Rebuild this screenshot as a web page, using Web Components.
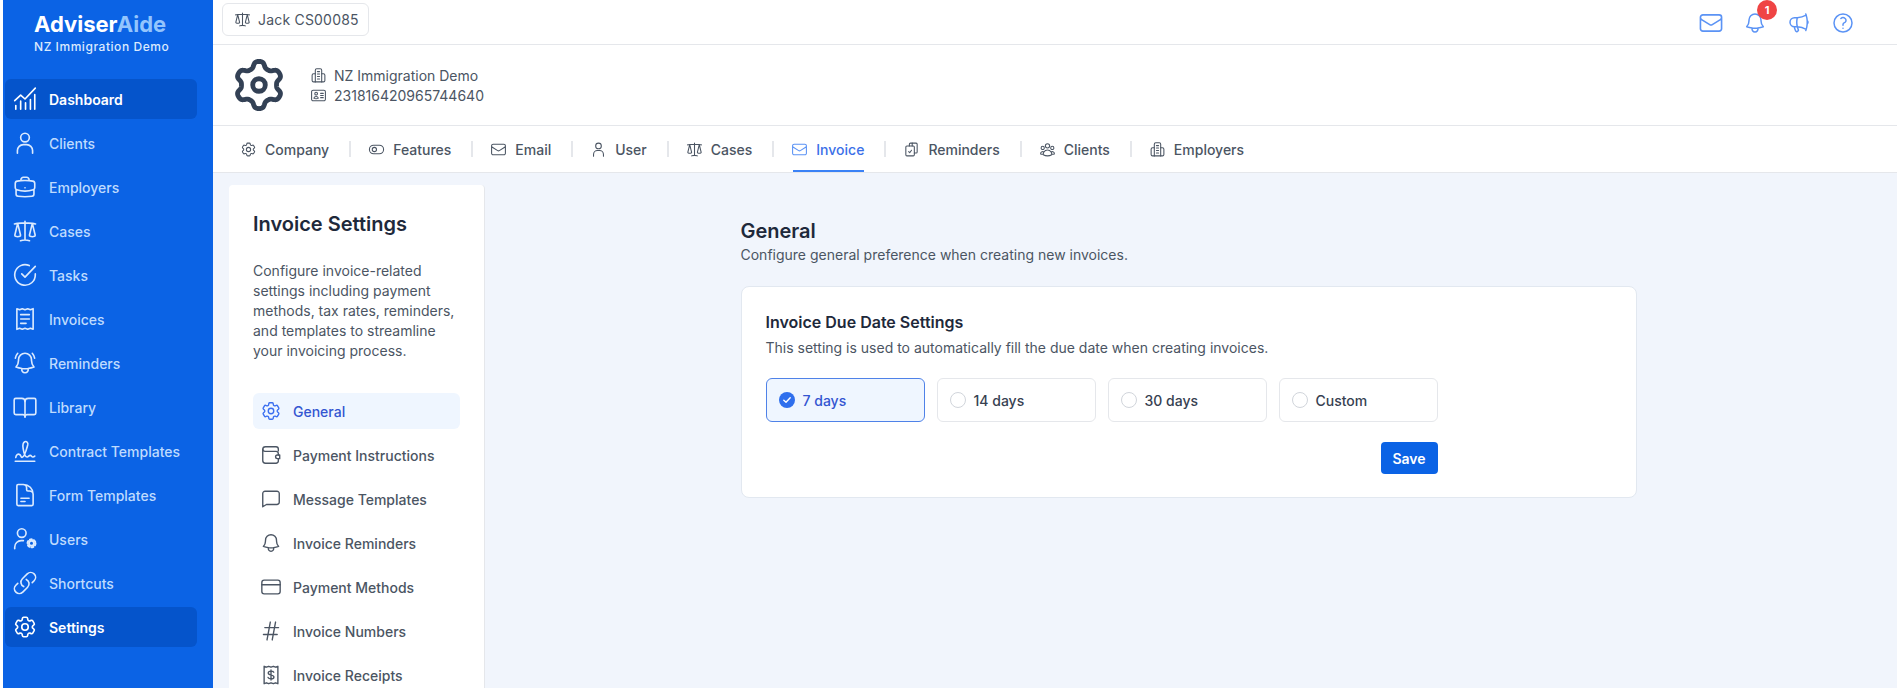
<!DOCTYPE html>
<html lang="en">
<head>
<meta charset="utf-8">
<title>Invoice Settings</title>
<style>
  html, body { margin: 0; height: 688px; overflow: hidden; background: #fff; }
  body { font-family: Inter, "Noto Sans", sans-serif; font-size: 14px; color: #4b5563; }
</style>
</head>
<body>

<app-shell>
  <side-bar slot="side">
    <nav-item icon="dashboard" active>Dashboard</nav-item>
    <nav-item icon="user">Clients</nav-item>
    <nav-item icon="briefcase">Employers</nav-item>
    <nav-item icon="scale">Cases</nav-item>
    <nav-item icon="task">Tasks</nav-item>
    <nav-item icon="receipt">Invoices</nav-item>
    <nav-item icon="bellalert">Reminders</nav-item>
    <nav-item icon="book">Library</nav-item>
    <nav-item icon="signature">Contract Templates</nav-item>
    <nav-item icon="doc">Form Templates</nav-item>
    <nav-item icon="usercog">Users</nav-item>
    <nav-item icon="link">Shortcuts</nav-item>
    <nav-item icon="cog" active>Settings</nav-item>
  </side-bar>

  <top-bar></top-bar>
  <company-header></company-header>

  <tab-bar>
    <tab-item icon="cog">Company</tab-item><tab-sep></tab-sep>
    <tab-item icon="toggle">Features</tab-item><tab-sep></tab-sep>
    <tab-item icon="mail">Email</tab-item><tab-sep></tab-sep>
    <tab-item icon="user">User</tab-item><tab-sep></tab-sep>
    <tab-item icon="scale">Cases</tab-item><tab-sep></tab-sep>
    <tab-item icon="mail" active>Invoice</tab-item><tab-sep></tab-sep>
    <tab-item icon="copycheck">Reminders</tab-item><tab-sep></tab-sep>
    <tab-item icon="group">Clients</tab-item><tab-sep></tab-sep>
    <tab-item icon="building">Employers</tab-item>
  </tab-bar>

  <settings-page>
    <settings-panel slot="panel">
      <panel-item icon="cog" active>General</panel-item>
      <panel-item icon="wallet">Payment Instructions</panel-item>
      <panel-item icon="chat">Message Templates</panel-item>
      <panel-item icon="bell">Invoice Reminders</panel-item>
      <panel-item icon="card">Payment Methods</panel-item>
      <panel-item icon="hash">Invoice Numbers</panel-item>
      <panel-item icon="dollar">Invoice Receipts</panel-item>
    </settings-panel>
    <general-settings>
      <due-option checked>7 days</due-option>
      <due-option>14 days</due-option>
      <due-option>30 days</due-option>
      <due-option>Custom</due-option>
    </general-settings>
  </settings-page>
</app-shell>

<script>
// the big round-lobed gear in the company header, sampled around the centre
function lobedGear() {
  const pts = [];
  for (let i = 0; i < 240; i++) {
    const a = (i / 240) * Math.PI * 2;
    const s = Math.tanh(1.6 * Math.cos(6 * a)) / Math.tanh(1.6);
    const r = 8.5 + 1.25 * s;
    pts.push((12 + r * Math.sin(a)).toFixed(2) + ' ' + (12 - r * Math.cos(a)).toFixed(2));
  }
  return '<path d="M' + pts.join('L') + 'Z"/><circle cx="12" cy="12" r="2.600"/>';
}

// icon paths, all on a 24 box
const ICONS = {
  gear: lobedGear(),
  dashboard: '<path d="M2.500 13.500 8 8.500l4 3.500 9.500-10"/><path d="M3.500 21.500v-3.500M8 21.500v-7.500M12.500 21.500v-6M17 21.500v-9M21 21.500V8"/>',
  user: '<circle cx="12" cy="7" r="4"/><path d="M5 21.500V19a5.500 5.500 0 0 1 5.500-5.500h3A5.500 5.500 0 0 1 19 19v2.500"/>',
  briefcase: '<path d="M20.250 14.150v4.250c0 1.094-.787 2.036-1.872 2.180-2.087.277-4.216.420-6.378.420s-4.291-.143-6.378-.420c-1.085-.144-1.872-1.086-1.872-2.180v-4.250m16.500 0a2.180 2.180 0 0 0 .750-1.661V8.706c0-1.081-.768-2.015-1.837-2.175a48.114 48.114 0 0 0-3.413-.387m4.500 8.006c-.194.165-.420.295-.673.380A23.978 23.978 0 0 1 12 15.750c-2.648 0-5.195-.429-7.577-1.220a2.016 2.016 0 0 1-.673-.380m0 0A2.180 2.180 0 0 1 3 12.489V8.706c0-1.081.768-2.015 1.837-2.175a48.111 48.111 0 0 1 3.413-.387m7.500 0V5.250A2.250 2.250 0 0 0 13.500 3h-3a2.250 2.250 0 0 0-2.250 2.250v.894m7.500 0a48.667 48.667 0 0 0-7.500 0M12 12.750h.008v.008H12v-.008Z"/>',
  scale: '<path d="M12 3v17.250m0 0c-1.472 0-2.882.265-4.185.750M12 20.250c1.472 0 2.882.265 4.185.750M18.750 4.970A48.416 48.416 0 0 0 12 4.500c-2.291 0-4.545.160-6.750.470m13.500 0c1.010.143 2.010.317 3 .520m-3-.520 2.620 10.726c.122.499-.106 1.028-.589 1.202a5.988 5.988 0 0 1-2.031.352 5.988 5.988 0 0 1-2.031-.352c-.483-.174-.711-.703-.590-1.202L18.750 4.971Zm-16.500.520c.990-.203 1.990-.377 3-.520m0 0 2.620 10.726c.122.499-.106 1.028-.589 1.202a5.989 5.989 0 0 1-2.031.352 5.989 5.989 0 0 1-2.031-.352c-.483-.174-.711-.703-.590-1.202L5.250 4.971Z"/>',
  task: '<path d="M21.500 11v1a9.500 9.500 0 1 1-5.600-8.700"/><path d="M21.500 4 12 14l-3-3"/>',
  receipt: '<path d="M4.500 2.500 7 3.500l2.500-1 2.500 1 2.500-1 2.500 1 2.500-1v19l-2.500-1-2.500 1-2.500-1-2.500 1-2.500-1-2.500 1Z"/><path d="M8 8h8M8 12h8M8 16h5"/>',
  bellalert: '<path d="M14.857 17.082a23.848 23.848 0 0 0 5.454-1.310A8.967 8.967 0 0 1 18 9.750V9A6 6 0 0 0 6 9v.750a8.967 8.967 0 0 1-2.312 6.022c1.733.640 3.560 1.085 5.455 1.310m5.714 0a24.255 24.255 0 0 1-5.714 0m5.714 0a3 3 0 1 1-5.714 0M3.124 7.500A8.969 8.969 0 0 1 5.292 3m13.416 0a8.969 8.969 0 0 1 2.168 4.500"/>',
  bell: '<path d="M14.857 17.082a23.848 23.848 0 0 0 5.454-1.310A8.967 8.967 0 0 1 18 9.750V9A6 6 0 0 0 6 9v.750a8.967 8.967 0 0 1-2.312 6.022c1.733.640 3.560 1.085 5.455 1.310m5.714 0a24.255 24.255 0 0 1-5.714 0m5.714 0a3 3 0 1 1-5.714 0"/>',
  book: '<path d="M12 7v14.500"/><path d="M12 7a3 3 0 0 0-3-3H3.500A1.500 1.500 0 0 0 2 5.500v12A1.500 1.500 0 0 0 3.500 19H10a2 2 0 0 1 2 2 2 2 0 0 1 2-2h6.500a1.500 1.500 0 0 0 1.500-1.500v-12A1.500 1.500 0 0 0 20.500 4H15a3 3 0 0 0-3 3Z"/>',
  signature: '<path d="M3 21.500h18"/><path d="M3.500 18c.2-2.300 2-3.600 3.500-2.800 1.600.9 1 3 2.500 2.600 2.300-.6 4.300-9 5-11.300.6-2.200-1-3.800-2.700-3-1.600.8-2 3.500-1.500 6.300.5 3.200 1.700 7.700 3.700 7.700 1.300 0 1.500-1.500 2.800-1.500s1.200 1.500 2.500 1.500c.7 0 1.200-.3 1.700-.8"/>',
  doc: '<path d="M19.500 14.250v-2.625a3.375 3.375 0 0 0-3.375-3.375h-1.500A1.125 1.125 0 0 1 13.500 7.125v-1.500a3.375 3.375 0 0 0-3.375-3.375H8.250m0 12.750h7.500m-7.500 3H12M10.500 2.250H5.625c-.621 0-1.125.504-1.125 1.125v17.250c0 .621.504 1.125 1.125 1.125h12.750c.621 0 1.125-.504 1.125-1.125V11.250a9 9 0 0 0-9-9Z"/>',
  usercog: '<circle cx="9" cy="6.500" r="4"/><path d="M2.500 21v-1.500a6 6 0 0 1 6-6h2"/><circle cx="18" cy="16" r="2.300" stroke-width="1.800"/><circle cx="18" cy="16" r="3.700" stroke-width="1.800" stroke-dasharray="1.900 1.975"/>',
  link: '<path d="M13.190 8.688a4.500 4.500 0 0 1 1.242 7.244l-4.500 4.500a4.500 4.500 0 0 1-6.364-6.364l1.757-1.757m13.350-.622 1.757-1.757a4.500 4.500 0 0 0-6.364-6.364l-4.500 4.500a4.500 4.500 0 0 0 1.242 7.244"/>',
  cog: '<path d="M9.594 3.940c.090-.542.560-.940 1.110-.940h2.593c.550 0 1.020.398 1.110.940l.213 1.281c.063.374.313.686.645.870.074.040.147.083.220.127.325.196.720.257 1.075.124l1.217-.456a1.125 1.125 0 0 1 1.370.490l1.296 2.247a1.125 1.125 0 0 1-.260 1.431l-1.003.827c-.293.241-.438.613-.430.992a7.723 7.723 0 0 1 0 .255c-.008.378.137.750.430.991l1.004.827c.424.350.534.955.260 1.430l-1.298 2.247a1.125 1.125 0 0 1-1.369.491l-1.217-.456c-.355-.133-.750-.072-1.076.124a6.470 6.470 0 0 1-.220.128c-.331.183-.581.495-.644.869l-.213 1.281c-.090.543-.560.940-1.110.940h-2.594c-.550 0-1.019-.398-1.110-.940l-.213-1.281c-.062-.374-.312-.686-.644-.870a6.520 6.520 0 0 1-.220-.127c-.325-.196-.720-.257-1.076-.124l-1.217.456a1.125 1.125 0 0 1-1.369-.490l-1.297-2.247a1.125 1.125 0 0 1 .260-1.431l1.004-.827c.292-.240.437-.613.430-.991a6.932 6.932 0 0 1 0-.255c.007-.380-.138-.751-.430-.992l-1.004-.827a1.125 1.125 0 0 1-.260-1.430l1.297-2.247a1.125 1.125 0 0 1 1.370-.491l1.216.456c.356.133.751.072 1.076-.124.072-.044.146-.086.220-.128.332-.183.582-.495.644-.869l.214-1.280Z"/><path d="M15 12a3 3 0 1 1-6 0 3 3 0 0 1 6 0Z"/>',
  mail: '<path d="M21.750 6.750v10.500a2.250 2.250 0 0 1-2.250 2.250h-15a2.250 2.250 0 0 1-2.250-2.250V6.750m19.500 0A2.250 2.250 0 0 0 19.500 4.500h-15a2.250 2.250 0 0 0-2.250 2.250m19.500 0v.243a2.250 2.250 0 0 1-1.070 1.916l-7.500 4.615a2.250 2.250 0 0 1-2.360 0L3.320 8.910a2.250 2.250 0 0 1-1.070-1.916V6.750"/>',
  megaphone: '<path d="M10.340 15.840c-.688-.060-1.386-.090-2.090-.090H7.500a4.500 4.500 0 1 1 0-9h.750c.704 0 1.402-.030 2.090-.090m0 9.180c.253.962.584 1.892.985 2.783.247.550.060 1.210-.463 1.511l-.657.380c-.551.318-1.260.117-1.527-.461a20.845 20.845 0 0 1-1.440-4.282m3.102.069a18.030 18.030 0 0 1-.590-4.590c0-1.586.205-3.124.590-4.590m0 9.180a23.848 23.848 0 0 1 8.835 2.535M10.340 6.660a23.847 23.847 0 0 0 8.835-2.535m0 0A23.740 23.740 0 0 0 18.795 3m.380 1.125a23.910 23.910 0 0 1 1.014 5.395m-1.014 8.855c-.118.380-.245.754-.380 1.125m.380-1.125a23.910 23.910 0 0 0 1.014-5.395m0-3.460c.495.413.811 1.035.811 1.730 0 .695-.316 1.317-.811 1.730m0-3.460a24.347 24.347 0 0 1 0 3.460"/>',
  help: '<path d="M9.879 7.519c1.171-1.025 3.071-1.025 4.242 0 1.172 1.025 1.172 2.687 0 3.712-.203.179-.430.326-.670.442-.745.361-1.450.999-1.450 1.827v.750M21 12a9 9 0 1 1-18 0 9 9 0 0 1 18 0Zm-9 5.250h.008v.008H12v-.008Z"/>',
  toggle: '<rect x="2" y="6" width="20" height="12" rx="6"/><circle cx="9" cy="12" r="3"/>',
  copycheck: '<path d="M9 7V4.500A1.500 1.500 0 0 1 10.500 3h8A1.500 1.500 0 0 1 20 4.500v11a1.500 1.500 0 0 1-1.500 1.500H16"/><rect x="4" y="7" width="12" height="14" rx="1.500"/><path d="m8 15 1.500 1.500L12 13"/><path d="M13 3v4"/>',
  group: '<path d="M18 18.720a9.094 9.094 0 0 0 3.741-.479 3 3 0 0 0-4.682-2.720m.940 3.198.001.031c0 .225-.012.447-.037.666A11.944 11.944 0 0 1 12 21c-2.170 0-4.207-.576-5.963-1.584A6.062 6.062 0 0 1 6 18.719m12 0a5.971 5.971 0 0 0-.941-3.197m0 0A5.995 5.995 0 0 0 12 12.750a5.995 5.995 0 0 0-5.058 2.772m0 0a3 3 0 0 0-4.681 2.720 8.986 8.986 0 0 0 3.740.477m.940-3.197a5.971 5.971 0 0 0-.940 3.197M15 6.750a3 3 0 1 1-6 0 3 3 0 0 1 6 0Zm6 3a2.250 2.250 0 1 1-4.500 0 2.250 2.250 0 0 1 4.500 0Zm-13.500 0a2.250 2.250 0 1 1-4.500 0 2.250 2.250 0 0 1 4.500 0Z"/>',
  building: '<path d="M7.500 21V4.500A2 2 0 0 1 9.500 2.500h5a2 2 0 0 1 2 2V21"/><path d="M7.500 9.500H5a2 2 0 0 0-2 2V19a2 2 0 0 0 2 2h14a2 2 0 0 0 2-2v-7.500a2 2 0 0 0-2-2h-2.500"/><path d="M10.500 6.500h3M10.500 10h3M10.500 13.500h3M10.500 17h3"/>',
  idcard: '<path d="M15 9h3.750M15 12h3.750M15 15h3.750M4.500 19.500h15a2.250 2.250 0 0 0 2.250-2.250V6.750A2.250 2.250 0 0 0 19.500 4.500h-15a2.250 2.250 0 0 0-2.250 2.250v10.500A2.250 2.250 0 0 0 4.500 19.500Zm6-10.125a1.875 1.875 0 1 1-3.750 0 1.875 1.875 0 0 1 3.750 0Zm1.294 6.336a6.721 6.721 0 0 1-3.170.789 6.721 6.721 0 0 1-3.168-.789 3.376 3.376 0 0 1 6.338 0Z"/>',
  wallet: '<path d="M20 7.500V5.500A2.500 2.500 0 0 0 17.500 3H6a3 3 0 0 0-3 3v12a3 3 0 0 0 3 3h11.500a2.500 2.500 0 0 0 2.500-2.500v-2"/><path d="M3 6a2.500 2.500 0 0 0 2.500 2h12A2.500 2.500 0 0 1 20 10.500V12"/><path d="M21.500 12H19a2 2 0 0 0 0 4h2.500Z"/>',
  chat: '<path d="M3 20.500V6a2.500 2.500 0 0 1 2.500-2.500h13A2.500 2.500 0 0 1 21 6v9.500a2.500 2.500 0 0 1-2.500 2.500H7Z"/>',
  card: '<rect x="2" y="4.500" width="20" height="15" rx="2.500"/><path d="M2 9.500h20"/>',
  hash: '<path d="M5.250 8.250h15m-16.500 7.500h15m-1.800-13.500-3.600 19.500m-2.100-19.500-3.600 19.500"/>',
  dollar: '<path d="M4.500 2.500 7 3.500l2.500-1 2.500 1 2.500-1 2.500 1 2.500-1v19l-2.500-1-2.500 1-2.500-1-2.500 1-2.500-1-2.500 1Z"/><path d="M12 6.500v11M15 9c-.5-1-1.500-1.200-3-1.200-1.700 0-3 .7-3 2.100 0 3.100 6.200 1.300 6.200 4.200 0 1.400-1.400 2.100-3.200 2.100-1.500 0-2.700-.4-3.200-1.500"/>'
};

class AppIcon extends HTMLElement {
  connectedCallback() {
    const size = this.getAttribute('size') || 24;
    const sw = this.getAttribute('stroke') || 1.5;
    const root = this.attachShadow({ mode: 'open' });
    root.innerHTML = `
      <style>
        :host { display: block; flex: none; width: ${size}px; height: ${size}px; }
        svg { display: block; width: 100%; height: 100%; fill: none; stroke: currentColor; stroke-width: ${sw}; stroke-linecap: round; stroke-linejoin: round; }
      </style>
      <svg viewBox="0 0 24 24" aria-hidden="true">${ICONS[this.getAttribute('name')] || ''}</svg>`;
  }
}
customElements.define('app-icon', AppIcon);

const shellTemplate = document.createElement('template');
shellTemplate.innerHTML = `
  <style>
    :host { display: flex; height: 688px; padding-left: 3px; box-sizing: border-box; background: #fff; }
    .main { flex: 1; min-width: 0; display: flex; flex-direction: column; }
  </style>
  <slot name="side"></slot>
  <div class="main"><slot></slot></div>`;

class AppShell extends HTMLElement {
  connectedCallback() {
    this.attachShadow({ mode: 'open' }).appendChild(shellTemplate.content.cloneNode(true));
  }
}
customElements.define('app-shell', AppShell);

class SideBar extends HTMLElement {
  connectedCallback() {
    this.attachShadow({ mode: 'open' }).innerHTML = `
      <style>
        :host { display: flex; flex-direction: column; flex: none; width: 210px; height: 688px; background: #0b63e5; }
        .logo { height: 79px; box-sizing: border-box; padding: 10px 0 0 31px; }
        .name { font-size: 22px; line-height: 28px; font-weight: 700; color: #fff; }
        .name span { color: #93c5fd; }
        .org { font-size: 12px; line-height: 16px; font-weight: 500; color: #dbeafe; letter-spacing: 0.55px; margin-top: 1px; }
        nav { display: flex; flex-direction: column; gap: 4px; }
      </style>
      <div class="logo">
        <div class="name">Adviser<span>Aide</span></div>
        <div class="org">NZ Immigration Demo</div>
      </div>
      <nav><slot></slot></nav>`;
  }
}
customElements.define('side-bar', SideBar);

class NavItem extends HTMLElement {
  connectedCallback() {
    this.attachShadow({ mode: 'open' }).innerHTML = `
      <style>
        :host { display: flex; align-items: center; gap: 11px; width: 192px; height: 40px; box-sizing: border-box; margin-left: 2px; padding-left: 7px; border-radius: 6px; font-size: 14px; font-weight: 500; color: #bfdbfe; }
        :host([active]) { background: #0554cb; color: #fff; font-weight: 600; }
        app-icon { color: #dbeafe; }
        :host([active]) app-icon { color: #fff; }
      </style>
      <app-icon name="${this.getAttribute('icon')}" size="26"></app-icon>
      <span><slot></slot></span>`;
  }
}
customElements.define('nav-item', NavItem);

class TopBar extends HTMLElement {
  connectedCallback() {
    this.attachShadow({ mode: 'open' }).innerHTML = `
      <style>
        :host { display: flex; justify-content: space-between; height: 45px; box-sizing: border-box; border-bottom: 1px solid #e5e7eb; padding: 3px 32px 0 9px; background: #fff; }
        .chip { display: flex; align-items: center; gap: 7px; height: 33px; box-sizing: border-box; padding: 0 9px 0 11px; border: 1px solid #e5e7eb; border-radius: 6px; font-size: 14px; color: #4b5563; letter-spacing: 0.2px; }
        .actions { display: flex; align-items: center; height: 40px; color: #5b93f5; }
        .btn { position: relative; display: flex; align-items: center; justify-content: center; width: 44px; height: 40px; }
        .badge { position: absolute; left: 24px; top: -3px; width: 20px; height: 20px; border-radius: 50%; background: #ef4444; color: #fff; font-size: 11px; font-weight: 700; line-height: 20px; text-align: center; }
      </style>
      <div class="chip"><app-icon name="scale" size="17"></app-icon><span>Jack CS00085</span></div>
      <div class="actions">
        <div class="btn"><app-icon name="mail" size="26"></app-icon></div>
        <div class="btn"><app-icon name="bell" size="24"></app-icon><span class="badge">1</span></div>
        <div class="btn"><app-icon name="megaphone" size="24"></app-icon></div>
        <div class="btn"><app-icon name="help" size="24"></app-icon></div>
      </div>`;
  }
}
customElements.define('top-bar', TopBar);

class CompanyHeader extends HTMLElement {
  connectedCallback() {
    this.attachShadow({ mode: 'open' }).innerHTML = `
      <style>
        :host { display: flex; align-items: center; gap: 22px; height: 81px; box-sizing: border-box; padding: 0 0 0 17px; background: #fff; border-bottom: 1px solid #e5e7eb; }
        .big { color: #334155; }
        .rows { display: flex; flex-direction: column; }
        .row { display: flex; align-items: center; gap: 7px; height: 20px; font-size: 14px; color: #4b5563; }
      </style>
      <app-icon class="big" name="gear" size="58" stroke="2"></app-icon>
      <div class="rows">
        <div class="row"><app-icon name="building" size="17"></app-icon><span>NZ Immigration Demo</span></div>
        <div class="row"><app-icon name="idcard" size="17"></app-icon><span>231816420965744640</span></div>
      </div>`;
  }
}
customElements.define('company-header', CompanyHeader);

class TabBar extends HTMLElement {
  connectedCallback() {
    this.attachShadow({ mode: 'open' }).innerHTML = `
      <style>
        :host { display: flex; align-items: center; height: 47px; box-sizing: border-box; padding-left: 27px; background: #fff; border-bottom: 1px solid #e5e7eb; }
      </style>
      <slot></slot>`;
  }
}
customElements.define('tab-bar', TabBar);

class TabItem extends HTMLElement {
  connectedCallback() {
    this.attachShadow({ mode: 'open' }).innerHTML = `
      <style>
        :host { position: relative; display: flex; align-items: center; gap: 8px; height: 46px; font-size: 14px; font-weight: 500; color: #4b5563; }
        :host([active]) { color: #3b6fe8; }
        :host([active]) app-icon { color: #5b93f5; }
        :host([active])::after { content: ""; position: absolute; left: 2px; right: 0; bottom: 0; height: 2px; background: #3b82f6; }
      </style>
      <app-icon name="${this.getAttribute('icon')}" size="17"></app-icon>
      <span><slot></slot></span>`;
  }
}
customElements.define('tab-item', TabItem);

class TabSep extends HTMLElement {
  connectedCallback() {
    this.attachShadow({ mode: 'open' }).innerHTML = `
      <style>:host { display: block; flex: none; width: 2px; height: 16px; margin: 0 17px 0 20px; background: #e5e7eb; }</style>`;
  }
}
customElements.define('tab-sep', TabSep);

class SettingsPage extends HTMLElement {
  connectedCallback() {
    this.attachShadow({ mode: 'open' }).innerHTML = `
      <style>
        :host { display: flex; flex: 1; min-height: 0; overflow: hidden; box-sizing: border-box; background: #f1f5fc; padding: 12px 0 0 16px; }
        .content { flex: 1; min-width: 0; display: flex; justify-content: center; padding-right: 5px; }
      </style>
      <slot name="panel"></slot>
      <div class="content"><slot></slot></div>`;
  }
}
customElements.define('settings-page', SettingsPage);

class SettingsPanel extends HTMLElement {
  connectedCallback() {
    this.attachShadow({ mode: 'open' }).innerHTML = `
      <style>
        :host { display: block; flex: none; width: 256px; box-sizing: border-box; padding: 25px 24px 24px; background: #fff; border-right: 1px solid #e5e7eb; border-radius: 4px 4px 0 0; }
        h2 { margin: 0; font-size: 20px; line-height: 28px; font-weight: 600; color: #1e293b; }
        p { margin: 23px 0 32px; font-size: 14px; line-height: 20px; color: #4b5563; }
        .list { display: flex; flex-direction: column; gap: 8px; }
      </style>
      <h2>Invoice Settings</h2>
      <p>Configure invoice-related settings including payment methods, tax rates, reminders, and templates to streamline your invoicing process.</p>
      <div class="list"><slot></slot></div>`;
  }
}
customElements.define('settings-panel', SettingsPanel);

class PanelItem extends HTMLElement {
  connectedCallback() {
    this.attachShadow({ mode: 'open' }).innerHTML = `
      <style>
        :host { display: flex; align-items: center; gap: 11px; height: 36px; box-sizing: border-box; padding-left: 7px; border-radius: 6px; font-size: 14px; font-weight: 500; color: #4b5563; }
        :host([active]) { background: #eff6ff; color: #3355d1; }
        :host([active]) app-icon { color: #3b6ff0; }
      </style>
      <app-icon name="${this.getAttribute('icon')}" size="22"></app-icon>
      <span><slot></slot></span>`;
  }
}
customElements.define('panel-item', PanelItem);

class GeneralSettings extends HTMLElement {
  connectedCallback() {
    this.attachShadow({ mode: 'open' }).innerHTML = `
      <style>
        :host { display: block; width: 896px; padding-top: 32px; }
        h2 { margin: 0; font-size: 20px; line-height: 28px; font-weight: 600; color: #1e293b; }
        .sub { margin: 0 0 21px; font-size: 14px; line-height: 20px; color: #4b5563; }
        .card { box-sizing: border-box; height: 212px; padding: 23px 24px 24px; background: #fff; border: 1px solid #e2e8f0; border-radius: 8px; }
        h3 { margin: 0; font-size: 16px; line-height: 24px; font-weight: 600; color: #1e293b; }
        .hint { margin: 4px 0 0; font-size: 14px; line-height: 20px; color: #4b5563; }
        .form { width: 672px; }
        .opts { display: grid; grid-template-columns: repeat(4, 159px); gap: 12px; margin-top: 20px; }
        .foot { display: flex; justify-content: flex-end; margin-top: 20px; }
        button { width: 57px; height: 32px; padding: 0; border: 0; border-radius: 4px; background: #0b63e5; color: #fff; font: 600 14px Inter, sans-serif; }
      </style>
      <h2>General</h2>
      <p class="sub">Configure general preference when creating new invoices.</p>
      <div class="card">
        <h3>Invoice Due Date Settings</h3>
        <p class="hint">This setting is used to automatically fill the due date when creating invoices.</p>
        <div class="form">
          <div class="opts"><slot></slot></div>
          <div class="foot"><button type="button">Save</button></div>
        </div>
      </div>`;
  }
}
customElements.define('general-settings', GeneralSettings);

class DueOption extends HTMLElement {
  connectedCallback() {
    const checked = this.hasAttribute('checked');
    this.attachShadow({ mode: 'open' }).innerHTML = `
      <style>
        :host { display: flex; align-items: center; gap: 8px; height: 44px; box-sizing: border-box; padding-left: 12px; border: 1px solid #e5e7eb; border-radius: 6px; background: #fff; font-size: 14px; font-weight: 500; color: #374151; }
        :host([checked]) { border-color: #4f82e8; background: #eff6ff; color: #3355d1; }
        .dot { flex: none; width: 16px; height: 16px; box-sizing: border-box; border: 1px solid #d1d5db; border-radius: 50%; background: #fff; }
        svg { flex: none; display: block; width: 16px; height: 16px; }
      </style>
      ${checked
        ? '<svg viewBox="0 0 16 16"><circle cx="8" cy="8" r="8" fill="#2f6fed"/><path d="M4.800 8.200 7 10.300l4.200-4.500" fill="none" stroke="#fff" stroke-width="1.400" stroke-linecap="round" stroke-linejoin="round"/></svg>'
        : '<span class="dot"></span>'}
      <span><slot></slot></span>`;
  }
}
customElements.define('due-option', DueOption);
</script>
</body>
</html>
